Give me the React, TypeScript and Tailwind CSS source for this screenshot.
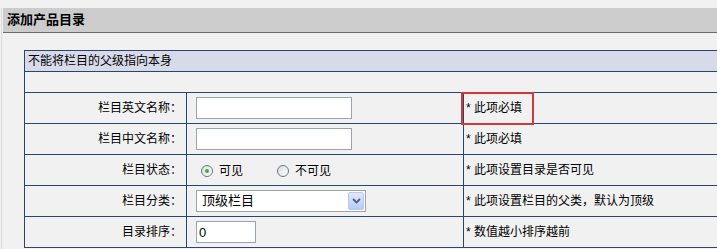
import { useState } from 'react';

const FONT = "font-['Liberation_Sans','Noto_Sans_CJK_SC',sans-serif]";

function Radio({ checked, label, onClick }: { checked: boolean; label: string; onClick: () => void }) {
  return (
    <button type="button" onClick={onClick} className="flex items-center gap-[6px]">
      <span className="flex h-[12px] w-[12px] items-center justify-center rounded-full border border-[#5d7a95] bg-gradient-to-br from-[#dcdcd6] to-white">
        {checked && <span className="h-[4px] w-[4px] rounded-full bg-[#3fae38]" />}
      </span>
      <span className="text-[12px] text-black">{label}</span>
    </button>
  );
}

interface RowProps {
  label: string;
  help: string;
  children: React.ReactNode;
  marked?: boolean;
}

function Row({ label, help, children, marked }: RowProps) {
  return (
    <div className="grid h-[31px] grid-cols-[162px_277px_1fr] border-b border-[#27466a]">
      <div className="flex items-center justify-end border-r border-[#27466a] pr-[4px] text-[12px] text-black">
        {label}
      </div>
      <div className="flex items-center border-r border-[#27466a] pl-[9px]">{children}</div>
      <div className="relative flex items-center pl-[2px] text-[12px] text-black">
        {marked && (
          <span className="absolute left-[-3px] top-[-1px] h-[33px] w-[73px] border-2 border-[#cc3b3b]" />
        )}
        {help}
      </div>
    </div>
  );
}

export default function App() {
  const [visible, setVisible] = useState(true);
  const [enName, setEnName] = useState('');
  const [cnName, setCnName] = useState('');
  const [order, setOrder] = useState('0');

  const inputCls =
    'h-[22px] border border-[#9aa4ad] bg-white px-[2px] text-[13px] text-black outline-none';

  return (
    <div className={`h-[249px] w-[717px] overflow-hidden bg-[#f1f1f1] pl-px pt-2 ${FONT}`}>
      <div className="h-full border-l border-[#d9d9d9] pl-px">
        <div className="flex h-[25px] items-center border-b border-[#6b6b6b] bg-[#cccccc] pl-1 text-[13px] font-bold text-black">
          添加产品目录
        </div>

        <div className="ml-[21px] mt-[17px] w-[700px] border-l border-t border-[#27466a]">
          <div className="flex h-[21px] items-center border-b border-[#27466a] bg-[#d8daea] pl-[3px] text-[12px] text-black">
            不能将栏目的父级指向本身
          </div>
          <div className="h-[21px] border-b border-[#27466a]" />

          <Row label="栏目英文名称：" help="* 此项必填" marked>
            <input value={enName} onChange={(e) => setEnName(e.target.value)} className={`${inputCls} w-[156px]`} />
          </Row>
          <Row label="栏目中文名称：" help="* 此项必填">
            <input value={cnName} onChange={(e) => setCnName(e.target.value)} className={`${inputCls} w-[156px]`} />
          </Row>
          <Row label="栏目状态：" help="* 此项设置目录是否可见">
            <div className="flex items-center gap-[34px] pl-[5px] pt-[2px]">
              <Radio checked={visible} label="可见" onClick={() => setVisible(true)} />
              <Radio checked={!visible} label="不可见" onClick={() => setVisible(false)} />
            </div>
          </Row>
          <Row label="栏目分类：" help="* 此项设置栏目的父类，默认为顶级">
            <div className="flex h-[22px] w-[170px] items-center justify-between border border-[#9aa4ad] bg-white pl-[5px] pr-px">
              <span className="text-[13px] text-black">顶级栏目</span>
              <span className="flex h-[18px] w-[16px] items-center justify-center rounded-[2px] border border-[#b9c9ef] bg-gradient-to-b from-[#dfe8fb] to-[#b8cbf4]">
                <svg width="9" height="6" viewBox="0 0 9 6">
                  <path d="M1 1 L4.5 4.5 L8 1" fill="none" stroke="#4d6185" strokeWidth="1.8" />
                </svg>
              </span>
            </div>
          </Row>
          <Row label="目录排序：" help="* 数值越小排序越前">
            <input value={order} onChange={(e) => setOrder(e.target.value)} className={`${inputCls} w-[60px]`} />
          </Row>
        </div>
      </div>
    </div>
  );
}
